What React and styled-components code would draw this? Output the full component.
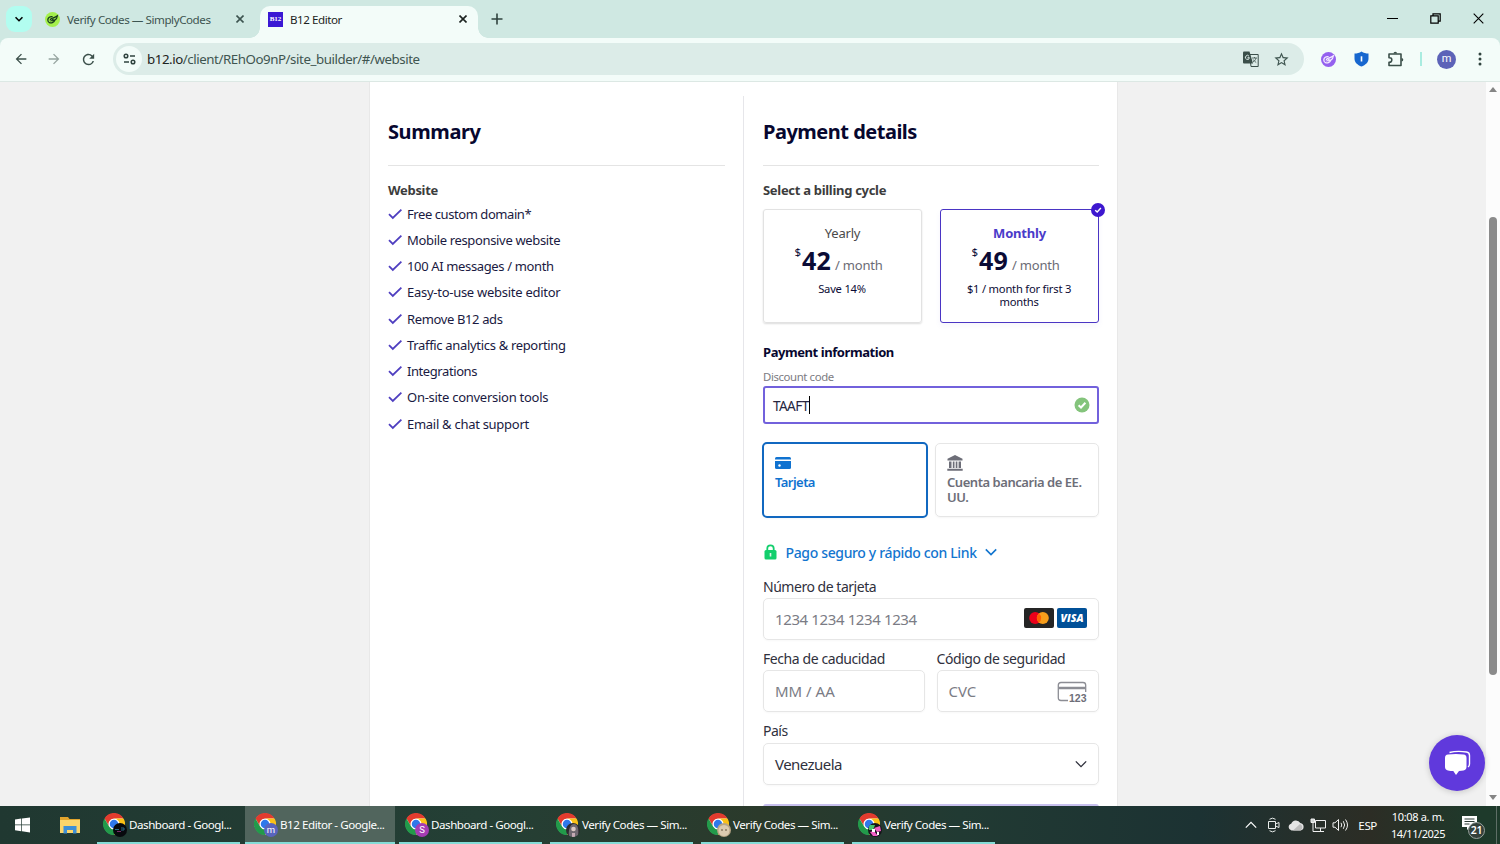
import React from "react"
import styled, { createGlobalStyle } from "styled-components"
import { MdArrowBack, MdArrowForward, MdRefresh, MdStarBorder } from "react-icons/md"

const GlobalStyle = createGlobalStyle`
  * {
    box-sizing: border-box;
  }
  body {
    margin: 0;
    overflow: hidden;
    font-family: "Noto Sans", "Open Sans", sans-serif;
  }
  svg {
    display: block;
    flex: none;
  }
`

const Screen = styled.div`
  width: 1500px;
  height: 844px;
  display: flex;
  flex-direction: column;
  background: #f1f1f1;
`

const Text = styled.span`
  white-space: nowrap;
  letter-spacing: ${(props) => props.$ls || 0}px;
`

/* browser chrome */

const TabStrip = styled.div`
  height: 38px;
  flex: none;
  display: flex;
  align-items: flex-start;
  background: #cfe8e2;
  font-size: 11.6px;
`

const TabSearch = styled.div`
  width: 26px;
  height: 26px;
  margin: 6px 0 0 6px;
  border-radius: 9px;
  background: #b2fdf0;
  display: flex;
  align-items: center;
  justify-content: center;
`

const Tab = styled.div`
  position: relative;
  display: flex;
  align-items: center;
  width: ${(props) => (props.$active ? 218 : 228)}px;
  height: 32px;
  margin-top: 6px;
  padding: ${(props) => (props.$active ? "0 11px 6px 8px" : "0 16px 6px 13px")};
  border-radius: 10px 10px 0 0;
  background: ${(props) => (props.$active ? "#f3fcf9" : "transparent")};
  color: ${(props) => (props.$active ? "#1c2321" : "#3d5450")};
`

const TabFlare = styled.span`
  position: absolute;
  bottom: 0;
  ${(props) => props.$side}: -10px;
  width: 10px;
  height: 10px;
  background: radial-gradient(
    circle at ${(props) => (props.$side === "left" ? "0 0" : "100% 0")},
    transparent 9.5px,
    #f3fcf9 10px
  );
`

const TabTitle = styled(Text)`
  flex: 1;
  margin-left: 7px;
`

const NewTab = styled.div`
  margin: 13px 0 0 13px;
`

const WindowButtons = styled.div`
  display: flex;
  align-items: center;
  gap: 32px;
  margin: 13px 16px 0 auto;
`

const Toolbar = styled.div`
  height: 44px;
  flex: none;
  background: #cfe8e2;
`

const ToolbarInner = styled.div`
  height: 44px;
  display: flex;
  align-items: center;
  padding: 0 18px 1px 12.5px;
  border-radius: 8px 8px 0 0;
  border-bottom: 1px solid #dce8e4;
  background: #f3fcf9;
  color: #3b4f4a;
`

const NavButton = styled.div`
  margin-right: 17.5px;
  opacity: ${(props) => (props.$disabled ? 0.5 : 1)};
`

const Omnibox = styled.div`
  width: 1191px;
  height: 32px;
  margin-left: -1px;
  padding: 0 14px 0 3px;
  border-radius: 16px;
  background: #dcece8;
  display: flex;
  align-items: center;
  font-size: 13.3px;
  color: #3f5550;
`

const SiteInfo = styled.div`
  width: 26px;
  height: 26px;
  margin-right: 5px;
  border-radius: 13px;
  background: #f3fcf9;
  display: flex;
  align-items: center;
  justify-content: center;
`

const Url = styled(Text)`
  flex: 1;
  b {
    font-weight: 400;
    color: #1c2321;
  }
`

const OmniboxIcons = styled.div`
  display: flex;
  align-items: center;
  gap: 14px;
`

const Extensions = styled.div`
  flex: 1;
  display: flex;
  align-items: center;
  gap: 18px;
  margin-left: 17px;
`

const Separator = styled.div`
  width: 2px;
  height: 14px;
  margin-left: -2px;
  background: #a9ece0;
`

const Avatar = styled.div`
  width: 19px;
  height: 19px;
  margin: 0 auto 0 -3px;
  border-radius: 50%;
  background: #5c63b8;
  color: #fff;
  font: 11px/18px Roboto, sans-serif;
  text-align: center;
`

/* page */

const Viewport = styled.div`
  height: 724px;
  flex: none;
  display: flex;
  overflow: hidden;
  position: relative;
`

const Card = styled.div`
  width: 749px;
  margin-left: 369px;
  padding: 14px 18px 0;
  display: flex;
  background: #fff;
  border: solid #e8e8e8;
  border-width: 0 1px;
  color: #0b0b35;
`

const Column = styled.div`
  display: flex;
  flex-direction: column;
  width: ${(props) => (props.$right ? 356 : 355)}px;
  padding-${(props) => (props.$right ? "left" : "right")}: ${(props) =>
    props.$right ? 19 : 18}px;
  border-left: ${(props) => (props.$right ? "1px solid #e6e6ea" : "0")};

  > * {
    flex: none;
  }
`

const Header = styled.h2`
  height: 70px;
  margin: 0 0 12px;
  padding-top: 2px;
  display: flex;
  align-items: center;
  border-bottom: 1px solid #e4e4e4;
  font-size: 20px;
  font-weight: 700;
  color: #07072f;
`

const SubHeading = styled.div`
  height: 23px;
  margin-top: ${(props) => props.$gap || 0}px;
  line-height: 24px;
  font-size: 13px;
  font-weight: 700;
  color: ${(props) => props.$color || "#3c3c3c"};
`

const FeatureList = styled.div`
  margin-top: -0.5px;
`

const Feature = styled.div`
  height: 26.25px;
  display: flex;
  align-items: center;
  gap: 5px;
  font-size: 13px;
  color: #1a1a42;
`

const Cycles = styled.div`
  display: flex;
  gap: 18px;
  margin-top: 8px;
`

const Cycle = styled.div`
  position: relative;
  width: 159px;
  height: 114px;
  padding-top: 13px;
  border: 1px solid ${(props) => (props.$active ? "#4a35c4" : "#e2e2e2")};
  border-radius: 3px;
  box-shadow: ${(props) =>
    props.$active ? "0 3px 6px #4a35c40c" : "0 1px 2px #00000024"};
  text-align: center;
`

const CycleName = styled.div`
  height: 21px;
  line-height: 21px;
  font-size: 13px;
  letter-spacing: -0.2px;
  font-weight: ${(props) => (props.$active ? 700 : 400)};
  color: ${(props) => (props.$active ? "#4a3bc9" : "#4a4a4a")};
`

const Price = styled.div`
  height: 38px;
  display: flex;
  align-items: flex-start;
  justify-content: center;
  padding-right: 8px;
`

const Currency = styled.span`
  margin-right: 1px;
  font-size: 11.5px;
  line-height: 16px;
`

const Amount = styled.span`
  font-size: 25px;
  font-weight: 700;
  line-height: 33px;
  letter-spacing: 0.2px;
`

const Period = styled(Text)`
  margin-left: 4px;
  font-size: 13px;
  line-height: 43px;
  color: #6b6b75;
`

const Note = styled.div`
  padding-right: 1px;
  font-size: 11.2px;
  line-height: 13px;
  letter-spacing: -0.22px;
`

const CheckBadge = styled.div`
  position: absolute;
  top: -7px;
  right: -7px;
  width: 14px;
  height: 14px;
  border-radius: 50%;
  background: #3d17cf;
`

const DiscountLabel = styled.div`
  height: 16px;
  margin-top: 6px;
  line-height: 16px;
  font-size: 11.4px;
  color: #7c7c82;
`

const DiscountInput = styled.div`
  display: flex;
  align-items: center;
  width: 336px;
  height: 38px;
  margin-top: 1px;
  padding: 0 7px 0 8px;
  border: 2px solid #7261dc;
  border-radius: 3px;
  font-size: 13.6px;
  color: #26263f;
`

const Caret = styled.span`
  width: 1px;
  height: 18px;
  margin-right: auto;
  background: #000;
`

const Methods = styled.div`
  display: flex;
  align-items: center;
  gap: 7px;
  margin: 18px 0 0 -1px;
`

const Method = styled.div`
  width: ${(props) => (props.$active ? 166 : 164)}px;
  height: ${(props) => (props.$active ? 76 : 74)}px;
  padding: ${(props) => (props.$active ? "12px 11px" : "11px")};
  border: ${(props) =>
    props.$active ? "2px solid #1168c0" : "1px solid #e6e6e6"};
  border-radius: 5px;
  box-shadow: 0 1px 2px #0000000a;
  color: ${(props) => (props.$active ? "#0f72d0" : "#6d6e78")};
  font-size: 13px;
  font-weight: 600;
  line-height: 15px;

  svg {
    margin-bottom: ${(props) => (props.$active ? 5 : 4)}px;
  }
`

const LinkRow = styled.div`
  display: flex;
  align-items: center;
  height: 22px;
  margin: 23px 0 13px;
  font-size: 14px;
  font-weight: 500;
  color: #1275cf;
`

const LinkText = styled(Text)`
  margin: 0 8px 0 7.5px;
`

const Label = styled.label`
  display: block;
  height: 22px;
  line-height: 22px;
  font-size: 14px;
  color: #30313d;
`

const Field = styled.div`
  display: flex;
  align-items: center;
  justify-content: space-between;
  height: 42px;
  margin-top: ${(props) => props.$gap || 0}px;
  margin-bottom: 8px;
  padding: 0 11px;
  border: 1px solid #e6e6e6;
  border-radius: 5px;
  box-shadow: 0 1px 2px #00000008;
  font-size: 15px;
  color: ${(props) => (props.$filled ? "#30313d" : "#7b7c85")};
`

const FieldPair = styled.div`
  display: grid;
  grid-template-columns: 162px 162.5px;
  gap: 11.5px;
`

const CardLogos = styled.div`
  display: flex;
  gap: 3px;
  margin-top: -2px;
`

const CardLogo = styled.div`
  width: 30px;
  height: 20px;
  border-radius: 2px;
  background: ${(props) => props.$bg};
  display: flex;
  align-items: center;
  justify-content: center;
  font: italic 800 10.5px/20px "Open Sans", sans-serif;
  color: #fff;
`

const CvcIcon = styled.div`
  position: relative;
  width: 30px;
  height: 21px;
`

const CvcDigits = styled.span`
  position: absolute;
  left: 12px;
  top: 11px;
  font: 700 10.5px/12px "Liberation Sans", sans-serif;
  color: #6d6e78;
`

const Submit = styled.div`
  height: 40px;
  margin-top: 11px;
  border-radius: 3px;
  background: #c8c0ee;
`

const Scrollbar = styled.div`
  width: 14px;
  margin-left: auto;
  padding: 5px 0 6px;
  display: flex;
  flex-direction: column;
  align-items: center;
  background: #fcfcfc;
`

const Thumb = styled.div`
  width: 8px;
  height: 458px;
  margin: 125px 0 auto;
  border-radius: 4px;
  background: #8b8b8b;
`

const ChatButton = styled.div`
  position: absolute;
  right: 15px;
  bottom: 15px;
  width: 56px;
  height: 56px;
  border-radius: 50%;
  background: #6039dc;
  box-shadow: 0 1px 6px #00000030;
  display: flex;
  align-items: center;
  justify-content: center;
`

/* taskbar */

const Taskbar = styled.div`
  height: 38px;
  flex: none;
  display: flex;
  background: linear-gradient(
    90deg,
    #203831 0,
    #243f35 480px,
    #2b3a2b 760px,
    #213a33 960px,
    #1c3233 1200px,
    #2c2d25 1370px,
    #1e3a2b 1480px
  );
  color: #fff;
  font-size: 11.6px;
`

const StartButton = styled.div`
  width: 45px;
  padding: 11px 0 0 15px;
`

const Explorer = styled.div`
  width: 52px;
  padding: 10px 0 0 15px;
`

const Task = styled.div`
  display: flex;
  align-items: center;
  width: ${(props) => props.$width}px;
  margin-right: ${(props) => props.$gap}px;
  padding: 0 0 0 ${(props) => props.$pad}px;
  border-bottom: 2px solid #84dcd7;
  background: ${(props) => (props.$active ? "#51655d" : "transparent")};
`

const TaskIcon = styled.div`
  position: relative;
  width: 22px;
  height: 22px;
  margin-right: 4px;
`

const TaskBadge = styled.div`
  position: absolute;
  left: 10px;
  top: 10px;
  width: 14px;
  height: 14px;
  border-radius: 50%;
  overflow: hidden;
  background: ${(props) => props.$bg};
  font: 9.5px/13px Roboto, sans-serif;
  text-align: center;
`

const Tray = styled.div`
  display: flex;
  align-items: center;
  margin-left: auto;
`

const TrayIcon = styled.div`
  margin-right: ${(props) => props.$gap}px;
`

const Clock = styled.div`
  width: 56px;
  margin: 0 15px 0 13px;
  font-size: 11px;
  line-height: 17px;
  text-align: center;
  display: flex;
  flex-direction: column;
  align-items: center;
`

const Notifications = styled.div`
  position: relative;
  width: 25px;
  height: 24px;
  margin-right: 10px;
  padding: 2px 0 0 1px;
`

const Count = styled.div`
  position: absolute;
  left: 7px;
  top: 9px;
  width: 17px;
  height: 17px;
  border: 1px solid #9aa39f;
  border-radius: 50%;
  background: #34403b;
  font: 600 10.5px/15px "Noto Sans", sans-serif;
  letter-spacing: -0.3px;
  text-align: center;
`

const ShowDesktop = styled.div`
  width: 4px;
  height: 38px;
  border-left: 1px solid #5e6e66;
`

const Cross = ({ size = 8, width = 1.6 }) => (
  <svg width={size} height={size} viewBox="0 0 8 8">
    <path d="M.5 .5l7 7M7.5 .5l-7 7" stroke="currentColor" strokeWidth={width} />
  </svg>
)

const Check = () => (
  <svg width="14" height="12" viewBox="0 0 14 12" fill="none">
    <path d="M1 6.200l3.800 3.700L13.400 1.600" stroke="#4f3fc0" strokeWidth="1.800" />
  </svg>
)

const Chevron = ({ size = 12, width = 1.6, up }) => (
  <svg width={size} height={size} viewBox="0 0 12 12" fill="none">
    <path
      d={up ? "M.8 8.600L6 3.400l5.200 5.200" : "M.8 3.400L6 8.600l5.200-5.200"}
      stroke="currentColor"
      strokeWidth={width}
    />
  </svg>
)

const Leaf = ({ bg, color }) => (
  <svg width="15" height="15" viewBox="0 0 15 15" fill="none">
    <circle cx="7.500" cy="7.500" r="7.500" fill={bg} />
    <path
      d="M7.600 4.600C5 4.200 2.900 5.600 2.800 7.900c-.1 2.300 2.300 3.600 4.600 2.700 1.500-.6 2.400-1.800 2.600-3.100"
      stroke={color}
      strokeWidth="1.300"
    />
    <path
      d="M5 8.300c.4-1.600 2-2.100 3.200-2.400 1.500-.4 2.600-1 4.200-2.200-.2 1.800-1 3.500-2.400 4.300-1.300.7-2.500.4-3.400 1.200"
      stroke={color}
      strokeWidth="1.200"
    />
    <path d="M5.500 9.200c.8-1.100 2-1.900 3.600-2.300" stroke={color} />
  </svg>
)

const B12Logo = styled.div`
  width: 15px;
  height: 15px;
  background: #3a18d4;
  color: #fff;
  font: 700 7px/15px "Liberation Serif", serif;
  text-align: center;
`

const ChromeLogo = () => (
  <svg width="22" height="22" viewBox="0 0 48 48">
    <circle cx="24" cy="24" r="23" fill="#fff" />
    <path fill="#e33b2e" d="M24 12h20.800A24 24 0 0 0 3.200 12l10.400 18A12 12 0 0 1 24 12z" />
    <path fill="#fbc116" d="M44.800 12A24 24 0 0 1 24 48l10.400-18A12 12 0 0 0 24 12z" />
    <path fill="#229a4a" d="M3.200 12l10.400 18a12 12 0 0 0 20.800 0L24 48A24 24 0 0 1 3.200 12z" />
    <circle cx="24" cy="24" r="9.300" fill="#2f78ea" />
  </svg>
)

const BadgeArt = ({ kind }) => {
  if (kind === "dark")
    return (
      <svg width="14" height="14" viewBox="0 0 14 14" fill="none">
        <path d="M2 6.500h4M8 5h3v2H8" stroke="#2b6a86" />
        <path d="M4 8.500h4" stroke="#7a2f6a" />
      </svg>
    )
  if (kind === "girl")
    return (
      <svg width="14" height="14" viewBox="0 0 14 14">
        <path d="M3 14C2 7 4 1 8 1s5 5 4 13z" fill="#6f6870" />
        <circle cx="7.500" cy="6" r="2.300" fill="#dcc9c4" />
        <path d="M6 10h3v4H6z" fill="#c4a9b4" />
      </svg>
    )
  if (kind === "face")
    return (
      <svg width="14" height="14" viewBox="0 0 14 14">
        <circle cx="7" cy="7.500" r="5.500" fill="#dccbb0" />
        <circle cx="5" cy="7" r=".8" fill="#54452f" />
        <circle cx="9" cy="7" r=".8" fill="#54452f" />
      </svg>
    )
  return (
    <svg width="14" height="14" viewBox="0 0 14 14">
      <path d="M1 2h6l-2 5H1z" fill="#48c46c" />
      <path d="M6 5l6-2 1 5-4 1zM2 9l4-1 4 5H5z" fill="#f05fc4" />
      <path d="M4 6h3v3H4zM9 9h2v3H9z" fill="#fff" />
    </svg>
  )
}

const features = [
  ["Free custom domain*", -0.43],
  ["Mobile responsive website", -0.34],
  ["100 AI messages / month", -0.36],
  ["Easy-to-use website editor", -0.27],
  ["Remove B12 ads", -0.37],
  ["Traffic analytics & reporting", -0.32],
  ["Integrations", -0.42],
  ["On-site conversion tools", -0.27],
  ["Email & chat support", -0.28],
]

const tasks = [
  { title: "Dashboard - Googl...", badge: "dark", bg: "#07090d", width: 143, gap: 5, pad: 6 },
  { title: "B12 Editor - Google...", letter: "m", bg: "#5964bd", width: 150, gap: 4, pad: 9, active: true },
  { title: "Dashboard - Googl...", letter: "S", bg: "#a53cb4", width: 143, gap: 8, pad: 6 },
  { title: "Verify Codes — Sim...", badge: "girl", bg: "#2c2a2f", width: 143, gap: 8, pad: 6 },
  { title: "Verify Codes — Sim...", badge: "face", bg: "#b9a585", width: 143, gap: 8, pad: 6 },
  { title: "Verify Codes — Sim...", badge: "pink", bg: "#16151a", width: 143, gap: 0, pad: 6 },
]

const Browser = () => (
  <>
    <TabStrip>
      <TabSearch>
        <Chevron size={8} width={2.4} />
      </TabSearch>
      <Tab>
        <Leaf bg="#a4f04c" color="#173a1c" />
        <TabTitle $ls={-0.44}>Verify Codes — SimplyCodes</TabTitle>
        <Cross />
      </Tab>
      <Tab $active>
        <TabFlare $side="left" />
        <TabFlare $side="right" />
        <B12Logo>B12</B12Logo>
        <TabTitle $ls={-0.45}>B12 Editor</TabTitle>
        <Cross />
      </Tab>
      <NewTab>
        <svg width="12" height="12" viewBox="0 0 12 12">
          <path d="M6 .5v11M.5 6h11" stroke="#30433f" strokeWidth="1.600" />
        </svg>
      </NewTab>
      <WindowButtons>
        <svg width="11" height="11" viewBox="0 0 11 11">
          <path d="M0 5.500h11" stroke="#000" />
        </svg>
        <svg width="11" height="11" viewBox="0 0 11 11" fill="none" stroke="#000">
          <path d="M.8 2.800h7.400v7.400H.8zM3 2.800V.8h7.200v7.400H8.200" strokeWidth="1.200" />
        </svg>
        <Cross size={11} width={0.8} />
      </WindowButtons>
    </TabStrip>
    <Toolbar>
      <ToolbarInner>
        <NavButton>
          <MdArrowBack size={16} />
        </NavButton>
        <NavButton $disabled>
          <MdArrowForward size={16} />
        </NavButton>
        <NavButton>
          <MdRefresh size={17} />
        </NavButton>
        <Omnibox>
          <SiteInfo>
            <svg width="13" height="12" viewBox="0 0 13 12" fill="none" stroke="#30433f" strokeWidth="1.500">
              <circle cx="3" cy="3" r="1.800" />
              <path d="M7 3h5M1 9h5" />
              <circle cx="10" cy="9" r="1.800" />
            </svg>
          </SiteInfo>
          <Url $ls={-0.44}>
            <b>b12.io</b>/client/REhOo9nP/site_builder/#/website
          </Url>
          <OmniboxIcons>
            <svg width="16" height="16" viewBox="0 0 16 16" fill="none">
              <path d="M6.500 3.500h8.700v12H8z" stroke="#3b4f4a" />
              <path d="M0 1.500Q0 .5 1 .5h5.500L10 12.500H1q-1 0-1-1z" fill="#3b4f4a" />
              <path d="M6 5.200a2 2 0 1 0 .4 1.500H4.500" stroke="#dcece8" />
              <path d="M9 7h5M11.500 6v1M13 7c-.5 2-1.500 3-3 4M10.200 8.500c.6 1.200 1.600 2 3 3" stroke="#3b4f4a" strokeWidth=".8" />
            </svg>
            <MdStarBorder size={17} />
          </OmniboxIcons>
        </Omnibox>
        <Extensions>
          <Leaf bg="#9461ef" color="#f4ecff" />
          <svg width="15" height="16" viewBox="0 0 15 16">
            <path d="M7.500.5c2 1.500 4.500 2 7 2v5c0 4-3 6.500-7 8-4-1.500-7-4-7-8v-5c2.500 0 5-.5 7-2z" fill="#1767cf" />
            <path d="M7.500 5.300v5.200" stroke="#fff" strokeWidth="1.600" />
          </svg>
          <svg width="17" height="17" viewBox="0 0 17 17" fill="none">
            <path
              d="M2 3h12v11.500H2v-3.200c2.200.1 2.800-1.100 2.800-2.500S4 6.600 2 6.700z"
              stroke="#3b4f4a"
              strokeWidth="1.600"
              strokeLinejoin="round"
            />
            <path d="M6.500 2.500a1.800 1.800 0 0 1 3.600 0zM14.500 7a1.800 1.800 0 0 1 0 3.600z" fill="#3b4f4a" />
          </svg>
          <Separator />
          <Avatar>m</Avatar>
          <svg width="4" height="14" viewBox="0 0 4 14" fill="#30433f">
            <circle cx="2" cy="2" r="1.500" />
            <circle cx="2" cy="7" r="1.500" />
            <circle cx="2" cy="12" r="1.500" />
          </svg>
        </Extensions>
      </ToolbarInner>
    </Toolbar>
  </>
)

const BillingCycle = ({ name, amount, active, children }) => (
  <Cycle $active={active}>
    {active && (
      <CheckBadge>
        <svg width="14" height="14" viewBox="0 0 14 14" fill="none">
          <path d="M4.200 7.200l2 1.900 3.700-4" stroke="#fff" strokeWidth="1.400" />
        </svg>
      </CheckBadge>
    )}
    <CycleName $active={active}>{name}</CycleName>
    <Price>
      <Currency>$</Currency>
      <Amount>{amount}</Amount>
      <Period $ls={-0.2}>/ month</Period>
    </Price>
    <Note>{children}</Note>
  </Cycle>
)

const PaymentForm = () => (
  <Column $right>
    <Header>
      <Text $ls={-0.5}>Payment details</Text>
    </Header>
    <SubHeading>
      <Text $ls={-0.3}>Select a billing cycle</Text>
    </SubHeading>
    <Cycles>
      <BillingCycle name="Yearly" amount="42">
        Save 14%
      </BillingCycle>
      <BillingCycle name="Monthly" amount="49" active>
        $1 / month for first 3
        <br />
        months
      </BillingCycle>
    </Cycles>
    <SubHeading $color="#07072f" $gap={17}>
      <Text $ls={-0.43}>Payment information</Text>
    </SubHeading>
    <DiscountLabel>
      <Text $ls={-0.4}>Discount code</Text>
    </DiscountLabel>
    <DiscountInput>
      <Text $ls={-0.6}>TAAFT</Text>
      <Caret />
      <svg width="16" height="16" viewBox="0 0 16 16" fill="none">
        <circle cx="8" cy="8" r="7.500" fill="#84c47c" />
        <path d="M4.600 8.200l2.400 2.300 4.400-4.700" stroke="#fff" strokeWidth="2" />
      </svg>
    </DiscountInput>
    <Methods>
      <Method $active>
        <svg width="16" height="14" viewBox="0 0 16 14" fill="#0f72d0">
          <path d="M0 3.500V2.500Q0 1 1.500 1h13Q16 1 16 2.500v1z" />
          <path d="M0 5h16v6.500q0 1.500-1.500 1.500h-13Q0 13 0 11.500z" />
          <circle cx="4.500" cy="9.500" r="1.200" fill="#fff" />
        </svg>
        <Text $ls={-0.55}>Tarjeta</Text>
      </Method>
      <Method>
        <svg width="16" height="16" viewBox="0 0 16 16" fill="#6d6e78">
          <path d="M8 0l7.500 3.800V5.500H.5V3.800zM2 6.500h2.500V13H2zM5.800 6.500h1.700V13H5.800zM8.700 6.500h1.700V13H8.700zM11.600 6.500H14V13h-2.400zM.3 13.800h15.400v1.900H.3z" />
        </svg>
        <Text $ls={-0.45}>
          Cuenta bancaria de EE.
          <br />
          UU.
        </Text>
      </Method>
    </Methods>
    <LinkRow>
      <svg width="15" height="16" viewBox="0 0 15 16">
        <path d="M4.300 7V4.500a3.200 3.200 0 0 1 6.400 0V7" fill="none" stroke="#13cf6d" strokeWidth="1.800" />
        <rect x="1.500" y="6" width="12" height="9.500" rx="1.500" fill="#13cf6d" />
        <path d="M7.500 9v3.500" stroke="#d9f8e6" strokeWidth="1.600" />
      </svg>
      <LinkText $ls={-0.35}>Pago seguro y rápido con Link</LinkText>
      <Chevron size={12} width={1.6} />
    </LinkRow>
    <Label>
      <Text $ls={-0.47}>Número de tarjeta</Text>
    </Label>
    <Field>
      <Text $ls={-0.38}>1234 1234 1234 1234</Text>
      <CardLogos>
        <CardLogo $bg="#252525">
          <svg width="20" height="12" viewBox="0 0 20 12">
            <circle cx="6.200" cy="6" r="6" fill="#eb001b" />
            <circle cx="13.800" cy="6" r="6" fill="#f79e1b" />
            <path d="M10 1.400a6 6 0 0 1 0 9.200 6 6 0 0 1 0-9.200z" fill="#ff5f00" />
          </svg>
        </CardLogo>
        <CardLogo $bg="#005098">VISA</CardLogo>
      </CardLogos>
    </Field>
    <FieldPair>
      <div>
        <Label>
          <Text $ls={-0.42}>Fecha de caducidad</Text>
        </Label>
        <Field>
          <Text>MM / AA</Text>
        </Field>
      </div>
      <div>
        <Label>
          <Text $ls={-0.42}>Código de seguridad</Text>
        </Label>
        <Field>
          <Text>CVC</Text>
          <CvcIcon>
            <svg width="30" height="21" viewBox="0 0 30 21" fill="none">
              <path
                d="M11 19.500H4q-2.700 0-2.700-2.700V4.200Q1.300 1.500 4 1.500h22q2.700 0 2.700 2.700V11"
                stroke="#8c8d94"
                strokeWidth="1.300"
              />
              <path d="M1.500 7h27" stroke="#8c8d94" strokeWidth="2.500" />
            </svg>
            <CvcDigits>123</CvcDigits>
          </CvcIcon>
        </Field>
      </div>
    </FieldPair>
    <Label>
      <Text $ls={-0.5}>País</Text>
    </Label>
    <Field $filled $gap={1}>
      <Text $ls={-0.55}>Venezuela</Text>
      <Chevron size={12} width={1.3} />
    </Field>
    <Submit />
  </Column>
)

const Page = () => (
  <Viewport>
    <Card>
      <Column>
        <Header>
          <Text $ls={-0.4}>Summary</Text>
        </Header>
        <SubHeading>
          <Text $ls={-0.3}>Website</Text>
        </SubHeading>
        <FeatureList>
          {features.map(([label, ls]) => (
            <Feature key={label}>
              <Check />
              <Text $ls={ls}>{label}</Text>
            </Feature>
          ))}
        </FeatureList>
      </Column>
      <PaymentForm />
    </Card>
    <Scrollbar>
      <svg width="8" height="5" viewBox="0 0 8 5" fill="#858585">
        <path d="M4 0l4 5H0z" />
      </svg>
      <Thumb />
      <svg width="8" height="5" viewBox="0 0 8 5" fill="#858585">
        <path d="M4 5L0 0h8z" />
      </svg>
    </Scrollbar>
    <ChatButton>
      <svg width="28" height="28" viewBox="0 0 28 28" fill="none">
        <path d="M6.500 3.500Q14 1.600 23.500 3q3 .4 3 3.500v8.500q0 2-1.500 3" stroke="#fff" strokeWidth="1.400" />
        <path d="M5 5.500q8-1 15.500 0 3 .4 3 3.400v9.200q0 3-3 3.400-2 .3-4.500.4L13 26l-2.700-4q-2.800 0-5.300-.5-3-.4-3-3.400V8.900q0-3 3-3.400z" fill="#fff" />
      </svg>
    </ChatButton>
  </Viewport>
)

const WindowsTaskbar = () => (
  <Taskbar>
    <StartButton>
      <svg width="15" height="16" viewBox="0 0 15 16" fill="#fff">
        <path d="M0 2.500l6.300-.9v5.900H0zM7 1.500L15 .4v7.100H7zM0 8.300h6.300v5.900L0 13.300zM7 8.300h8v7.100l-8-1.100z" />
      </svg>
    </StartButton>
    <Explorer>
      <svg width="20" height="18" viewBox="0 0 20 18">
        <path d="M0 1h8l1.500 2H20v14H0z" fill="#e2a52d" />
        <path d="M0 4h20v13H0z" fill="#fbd56b" />
        <path d="M3.500 10h13v7.500h-3.500v-3.500H7v3.500H3.500z" fill="#3d8fd6" />
      </svg>
    </Explorer>
    {tasks.map((task, i) => (
      <Task key={i} $width={task.width} $gap={task.gap} $pad={task.pad} $active={task.active}>
        <TaskIcon>
          <ChromeLogo />
          <TaskBadge $bg={task.bg}>{task.letter || <BadgeArt kind={task.badge} />}</TaskBadge>
        </TaskIcon>
        <Text $ls={-0.46}>{task.title}</Text>
      </Task>
    ))}
    <Tray>
      <TrayIcon $gap={10}>
        <Chevron size={12} width={1.2} up />
      </TrayIcon>
      <TrayIcon $gap={8}>
        <svg width="13" height="16" viewBox="0 0 13 16" fill="none" stroke="#e8ecea">
          <path d="M1.500 4.500h7v7h-7zM8.500 7l3.500-1.500v5L8.500 9M2.500 2.300q3-2.300 6 0M2.500 13.700q3 2.300 6 0" />
        </svg>
      </TrayIcon>
      <TrayIcon $gap={6}>
        <svg width="16" height="12" viewBox="0 0 16 12">
          <path d="M3.500 11.500a3.500 3.500 0 0 1-.3-6.800A5 5 0 0 1 12.300 4a3.800 3.800 0 0 1 .2 7.500z" fill="#e4e4e4" />
          <path d="M5 11.500l7-6.500a3.600 3.600 0 0 1 .5 6.500z" fill="#bcbcbc" />
        </svg>
      </TrayIcon>
      <TrayIcon $gap={5}>
        <svg width="17" height="15" viewBox="0 0 17 15" fill="none" stroke="#f0f0f0">
          <path d="M5.500 2.500h10v7.500h-10zM10.500 10v3.500M7 13.500h7M3 5v8.500h4" />
          <path d="M1 1h3.500v3.500H1z" fill="#cfd5d2" />
        </svg>
      </TrayIcon>
      <TrayIcon $gap={9.5}>
        <svg width="17" height="14" viewBox="0 0 17 14" fill="none" stroke="#f0f0f0">
          <path d="M1 4.800h2L6.500 1.500v11L3 9.200H1zM9 4.800q1.500 2.200 0 4.400M11.300 3.200q2.700 3.800 0 7.600M13.500 1.500q4 5.500 0 11" />
        </svg>
      </TrayIcon>
      <Text $ls={-0.4}>ESP</Text>
      <Clock>
        <Text $ls={-0.35}>10:08 a. m.</Text>
        <Text $ls={-0.45}>14/11/2025</Text>
      </Clock>
      <Notifications>
        <svg width="16" height="16" viewBox="0 0 16 16">
          <path d="M0 1h15v11H8l-3 3v-3H0z" fill="#fff" />
          <path d="M2.500 4h10M2.500 6.500h10M2.500 9h5" stroke="#2b3b34" />
        </svg>
        <Count>21</Count>
      </Notifications>
      <ShowDesktop />
    </Tray>
  </Taskbar>
)

const App = () => (
  <Screen>
    <GlobalStyle />
    <Browser />
    <Page />
    <WindowsTaskbar />
  </Screen>
)

export default App
